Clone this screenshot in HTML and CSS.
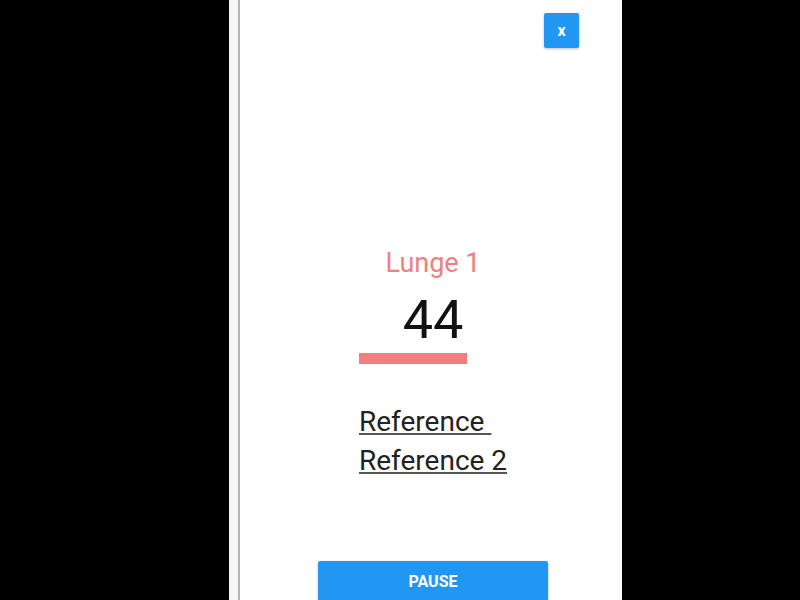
FILE: index.html
```html
<!DOCTYPE html>
<html lang="en">
<head>
    <meta charset="UTF-8">
    <meta name="viewport" content="initial-scale=1"/>
    <title>Workout Timer</title>
    <link rel="stylesheet" href="styles.css">
</head>
<body>
<div id="phone">
    <div id="screen">
        <div id="header">
            <button class="btn_close">x</button>
        </div>
        <div id="content">
            <div class="exercise">
                <div class="exercise_name">Lunge 1</div>
                <div class="exercise_count">44</div>
                <div class="progress"><div class="progress_fill" style="width: 108px"></div></div>
                <div class="links">
                    <a href="#">Reference&nbsp;</a>
                    <a href="#">Reference 2</a>
                </div>
            </div>
            <button class="btn_pause">PAUSE</button>
        </div>
    </div>
</div>
</body>
</html>
```

FILE: styles.css
```css
html, body {
    margin: 0;
    height: 100%;
    background-color: #000;
    overflow: hidden;
}

#phone {
    margin-left: 229px;
    width: 384px;
    height: 600px;
    background-color: #fff;
    border-left: 9px solid #f6f6f6;
}

#screen {
    height: 100%;
    border-left: 2px solid #b4b4b4;
    font-family: Roboto, "Liberation Sans", sans-serif;
}

#header {
    display: flex;
    justify-content: flex-end;
    padding: 13px 43px 0 0;
}

.btn_close {
    width: 35px;
    height: 35px;
    border: none;
    border-radius: 2px;
    background-color: #2196f3;
    color: #fff;
    font-family: Roboto, sans-serif;
    font-weight: bold;
    font-size: 16px;
    padding: 0;
    box-shadow: 0 1px 3px rgba(0, 0, 0, 0.25);
}

#content {
    display: flex;
    flex-direction: column;
    align-items: center;
    padding-left: 4px;
}

.exercise {
    width: 148px;
    margin-top: 200px;
}

.exercise_name {
    text-align: center;
    color: #f08080;
    font-size: 27px;
    line-height: 30px;
}

.exercise_count {
    text-align: center;
    margin-top: 12px;
    font-size: 54px;
    line-height: 60px;
    color: #111;
}

.progress {
    margin-top: 3px;
    height: 11px;
}

.progress_fill {
    height: 100%;
    background-color: #f08080;
}

.links {
    margin-top: 38px;
}

.links a {
    display: block;
    color: #222;
    font-size: 28px;
    line-height: 39px;
    white-space: nowrap;
    text-decoration-color: #555;
}

.btn_pause {
    margin-top: 81px;
    width: 230px;
    height: 40px;
    border: none;
    border-radius: 2px;
    background-color: #2196f3;
    color: #fff;
    font-family: Roboto, sans-serif;
    font-weight: bold;
    font-size: 16px;
    box-shadow: 0 1px 3px rgba(0, 0, 0, 0.25);
}
```
